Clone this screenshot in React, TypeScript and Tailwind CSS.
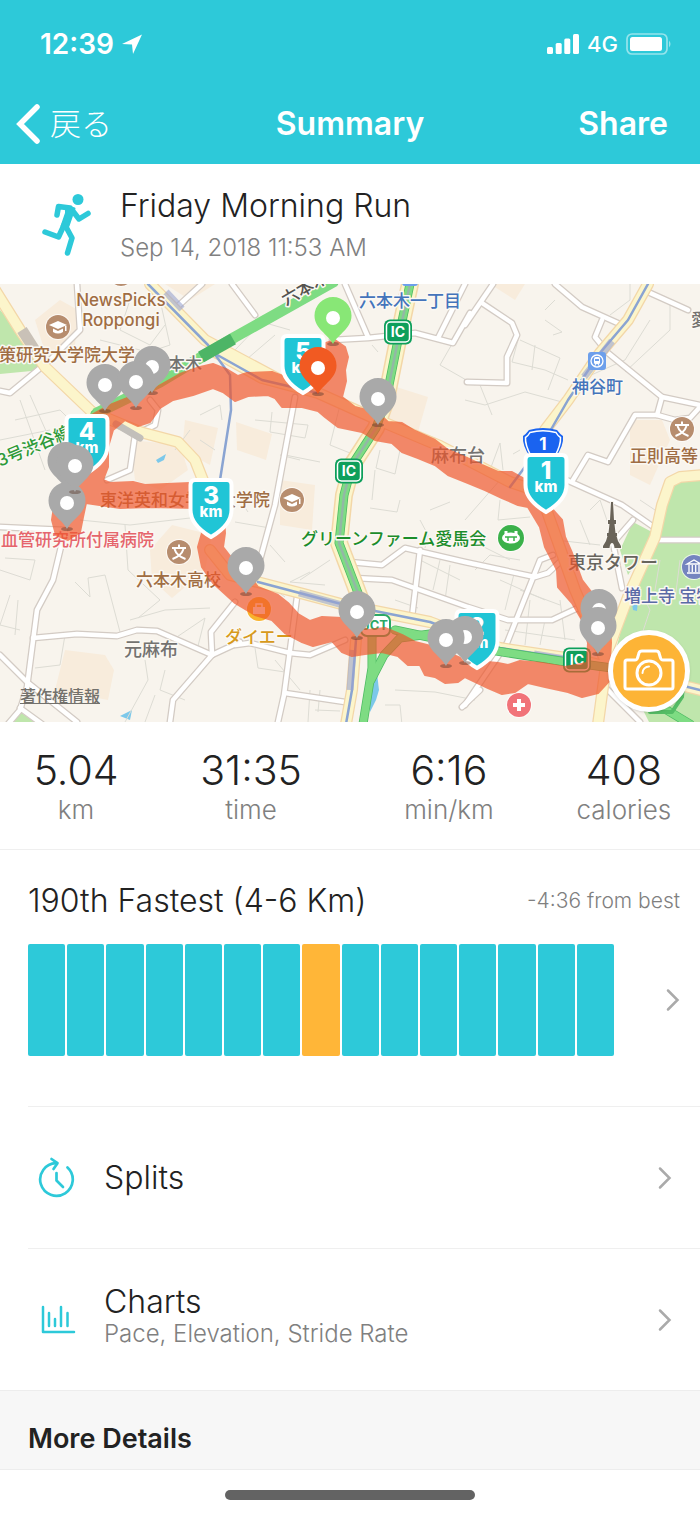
import { clsx } from "clsx";
import type { ReactNode } from "react";

const stats = [
  { value: "5.04", label: "km" },
  { value: "31:35", label: "time" },
  { value: "6:16", label: "min/km" },
  { value: "408", label: "calories" },
];

const BAR_COUNT = 15;
const CURRENT_BAR = 7;

const minorStreets = [
  "M15 420L60 410L75 425M0 440L50 430M20 400L45 470M30 395L50 440M0 455L50 445",
  "M130 300L120 330L150 345L165 325M100 340L140 350M160 300L170 345L140 355",
  "M235 350L262 322L290 330M240 365L275 335M255 420L308 425L305 438L270 432L272 412",
  "M340 405L330 445L355 455M300 460L280 455M285 455L320 462M375 470L372 500",
  "M380 450L376 468L395 474L400 450M440 365L460 330M440 365L475 385M372 345L378 352",
  "M465 400L485 405L525 392L562 402M480 385L492 415M520 340L560 358L548 390",
  "M518 340L512 362L545 370L568 380M535 345L532 370M545 320L562 332L553 335M545 310L555 300",
  "M630 284L630 300L610 315M650 320L625 360L580 380M670 300L670 330L625 372",
  "M490 470L500 443L503 470M513 454L520 450M500 480L465 520",
  "M500 500L498 520L530 517M590 510L600 500L612 535M555 540L600 545",
  "M80 520L130 525L190 518M125 525L128 570L160 600L138 618M0 570L30 580L35 560L5 558",
  "M75 582L90 597L88 578L105 575L120 632M10 595L0 625L20 630M18 600L15 635",
  "M130 620L165 610L210 608M165 645L205 618L198 646M155 695L145 722M65 635L60 665L35 668",
  "M145 660L148 680L125 722M165 670L160 690L185 700M235 522L270 528M270 545L285 562",
  "M310 572L290 582L325 585M235 560L285 597M330 560L300 580M255 648L258 668L285 672",
  "M275 660L300 690M310 690L308 722M240 500L248 512M320 690L318 712M315 710L340 711",
  "M395 690L435 692L475 700M385 705L400 705L402 725M420 520L428 535L425 548M430 510L450 502",
  "M400 500L397 512L370 508M420 560L460 580M440 560L433 590M395 600L418 608M450 565L445 600",
  "M475 570L490 555L520 560M480 545L510 560M500 580L545 600M515 570L505 610M520 590L560 605",
  "M530 600L525 645M545 620L540 645M505 630L575 640M560 600L565 640M590 545L580 520",
  "M640 500L655 510M660 560L655 590M640 640L650 610L645 600M680 560L675 600",
  "M200 415L220 405L222 420M190 430L175 450M200 440L215 450M0 350L20 360",
];

const whiteRoads = [
  "M493 284L465 325",
  "M470 313L453 343L415 333L368 338L332 340",
  "M465 284L438 338",
  "M345 284L368 337",
  "M482 303L512 323L517 335L507 357L507 383L467 382",
  "M555 284L582 307L622 325",
  "M602 320L595 337L608 353L662 397L700 405",
  "M648 292L688 310",
  "M662 397L657 415L635 415L608 462L588 455L573 480",
  "M657 415L675 420L690 418L700 407",
  "M562 478L622 505L655 528",
  "M633 520L613 543L622 588",
  "M658 540L700 540",
  "M350 562L382 565L405 548L465 562L535 577L548 573L562 560",
  "M553 555L540 560L507 643L465 705",
  "M355 578L392 580L468 607L508 620L552 620L580 607",
  "M420 550L412 617",
  "M297 597L290 650L284 695L278 722",
  "M285 693L345 702",
  "M235 645L250 643L290 653L310 655L345 640",
  "M0 527L65 530L53 580L37 610L27 687L20 710L8 724",
  "M33 638L77 634L117 636L137 630L157 631L212 655L240 642",
  "M0 655L27 682L77 722",
  "M20 708L42 724",
  "M212 655L173 700L170 722",
  "M212 655L211 632L235 602",
  "M295 397L275 505L260 560",
  "M77 284L80 330L50 360L10 393L0 391",
  "M202 284L177 307",
  "M232 284L255 315",
  "M117 423L135 435L130 470L107 480",
  "M135 435L155 425L158 410L150 400",
  "M605 687L640 722",
  "M480 690L462 707",
];

const yellowRoads = [
  "M-5 290L20 330L45 367L92 412L140 432L178 442L195 460L206 488",
  "M215 352L262 378L318 393L378 420L440 446L510 482L540 492L575 590L605 660",
  "M648 284L628 320L600 353L568 400L545 430",
  "M210 550L230 575L300 593L345 605L430 622L500 648L580 660L700 690",
  "M356 640L352 690L346 724",
  "M702 475L680 477L670 482L662 505L655 537L628 597L608 650L598 724",
  "M150 284L205 340L280 380",
];

const subwayLines = [
  "M148 284L208 345L230 375L231 410L220 480",
  "M648 284L628 320L600 353L568 400L545 440L510 487",
  "M258 582L345 605L430 622L500 648L580 660L700 690",
  "M356 640L352 690L346 724",
  "M212 352L262 380L318 393",
];

const expressways = [
  "M95 414L160 382L210 352L235 337L335 281",
  "M410 284L398 340L386 400L376 428L352 465L344 495L339 543L355 585L372 630",
  "M395 630L490 650L560 661L612 668L655 703L690 724",
  "M372 630L372 668L363 724",
  "M371 680L384 655L400 638L430 634",
];

// Outer and inner edge of the GPS track
const TRACK_OUTER =
  "M86 503L83 517L80 532L68 540L56 535L52 520L55 500L75 470L75 440L90 416L110 405L135 395L155 388L180 374L200 367L213 364L228 370L238 376L247 373L272 372L285 377L310 380L323 344L335 340L345 347L348 357L345 370L346 381L342 397L355 407L378 413L388 422L402 423L415 431L435 440L448 450L467 458L482 465L498 472L512 472L530 482L553 510L562 520L565 537L572 553L582 580L592 593L610 620L611 643L610 660L610 680L598 693L582 697L568 692L545 687L528 683L515 692L502 694L488 688L465 677L458 682L445 683L435 677L425 675L420 665L408 665L398 656L382 652L365 654L352 656L342 652L332 641L313 646L302 642L285 633L272 620L255 615L235 603L213 583L202 567L198 547L202 533L198 508L150 507L120 508Z";
const TRACK_INNER =
  "M103 480L110 483L133 482L145 485L167 484L190 483L222 490L225 533L223 547L230 556L245 570L258 587L278 595L288 603L298 614L310 621L322 617L342 618L368 630L385 628L402 635L415 642L435 647L465 660L498 663L508 665L520 661L542 663L565 667L587 663L588 643L582 620L572 603L558 587L557 570L545 547L540 527L528 507L518 505L502 498L485 490L468 483L448 475L435 465L418 458L402 452L392 443L375 440L362 432L338 427L325 417L318 411L302 407L282 407L275 398L268 395L248 396L235 401L223 392L213 388L193 395L173 400L160 408L150 422L138 426L125 420L113 430L108 447L108 467Z";

type Anchor = "start" | "middle";
interface MapLabel {
  x: number;
  y: number;
  text: string;
  color: string;
  size?: number;
  anchor?: Anchor;
  rotate?: number;
}

const BROWN = "#a06d43";
const GRAY = "#737270";

const labels: MapLabel[] = [
  { x: 121, y: 306, text: "NewsPicks", color: BROWN, anchor: "middle" },
  { x: 121, y: 326, text: "Roppongi", color: BROWN, anchor: "middle" },
  { x: -1, y: 361, text: "策研究大学院大学", color: BROWN },
  { x: 151, y: 370, text: "六本木", color: GRAY },
  { x: 286, y: 306, text: "六本木", color: "#55534f", rotate: -30 },
  { x: 359, y: 307, text: "六本木一丁目", color: "#4474bb" },
  { x: 572, y: 393, text: "神谷町", color: "#4474bb" },
  { x: 691, y: 326, text: "愛", color: GRAY },
  { x: 630, y: 462, text: "正則高等", color: BROWN },
  { x: 431, y: 462, text: "麻布台", color: GRAY, size: 18 },
  { x: 0, y: 467, text: "3号渋谷線", color: "#2c9a38", rotate: -23 },
  { x: 100, y: 506, text: "東洋英和女学院大学院", color: BROWN },
  { x: 1, y: 546, text: "血管研究所付属病院", color: "#e5656c" },
  { x: 136, y: 586, text: "六本木高校", color: BROWN },
  { x: 124, y: 656, text: "元麻布", color: GRAY, size: 18 },
  { x: 225, y: 643, text: "ダイエー", color: "#d79a1c" },
  { x: 301, y: 545, text: "グリーンファーム愛馬会", color: "#1c8d2b" },
  { x: 568, y: 569, text: "東京タワー", color: "#67645c", size: 18 },
  { x: 624, y: 602, text: "増上寺 宝物", color: "#5a6aa6" },
];

// Each point is the centre of the white dot inside the pin
const grayPins = [
  [152, 367],
  [105, 385],
  [136, 382],
  [66, 463],
  [67, 503],
  [75, 466],
  [378, 399],
  [246, 568],
  [357, 612],
  [465, 637],
  [446, 640],
  [599, 610],
  [598, 628],
];

const kmMarkers = [
  { km: 1, x: 546, y: 455 },
  { km: 2, x: 477, y: 611 },
  { km: 3, x: 211, y: 480 },
  { km: 4, x: 87, y: 416 },
  { km: 5, x: 303, y: 336 },
];

function Pin({ x, y, color }: { x: number; y: number; color: string }) {
  return (
    <g transform={`translate(${x} ${y})`}>
      <ellipse cx="0" cy="26" rx="6" ry="2" fill="#5b3a2c" opacity=".45" />
      <path d="M0 26C-5 16-18.500 11-18.500-2.500a18.500 18.500 0 0 1 37 0C18.500 11 5 16 0 26Z" fill={color} />
      <circle r="7" fill="#fff" />
    </g>
  );
}

function KmMarker({ km, x, y }: { km: number; x: number; y: number }) {
  return (
    <g transform={`translate(${x} ${y})`} textAnchor="middle" fill="#fff" fontWeight="800">
      <path
        d="M-16 0H16Q20.500 0 20.500 5V30C20.500 42 12 50 0 57C-12 50-20.500 42-20.500 30V5Q-20.500 0-16 0Z"
        fill="#20c5d6"
        stroke="#fff"
        strokeWidth="4"
      />
      <text y="24" fontSize="24">{km}</text>
      <text y="37" fontSize="15">km</text>
    </g>
  );
}

function RoadBadge({ x, y, text }: { x: number; y: number; text: string }) {
  return (
    <g transform={`translate(${x} ${y})`}>
      <rect x="-14" y="-12.500" width="28" height="25" rx="6" fill="#0d9f5b" />
      <rect x="-11.500" y="-10" width="23" height="20" rx="4" fill="#0d9f5b" stroke="#fff" strokeWidth="1.500" />
      <text y="5" textAnchor="middle" fontSize="14" fontWeight="700" fill="#fff">{text}</text>
    </g>
  );
}

function Poi({ x, y, color, r = 12, children }: { x: number; y: number; color: string; r?: number; children: ReactNode }) {
  return (
    <g transform={`translate(${x} ${y})`}>
      <circle r={r + 1} fill="#fff" opacity=".7" />
      <circle r={r} fill={color} />
      {children}
    </g>
  );
}

function GraduationCap() {
  return (
    <g fill="#fff">
      <path d="M0-6L9-2L0 2L-9-2Z" />
      <path d="M-5 1.500L0 4L5 1.500V5Q0 8-5 5ZM7-1H8.500V4H7Z" />
    </g>
  );
}

function SchoolMark() {
  return (
    <path d="M0-7.500V-4M-7-4H7M-4.500-3C-3 2 1 5 6.500 7M4.500-3C3 2-1 5-6.500 7" fill="none" stroke="#fff" strokeWidth="2" />
  );
}

function RouteMap() {
  return (
    <svg
      viewBox="0 284 700 438"
      role="img"
      aria-label="Route map"
      className="block h-auto w-full font-['Inter','Noto_Sans_CJK_JP',sans-serif]"
    >
      <rect y="284" width="700" height="438" fill="#f8f4ed" />

      <g fill="#f8ecdc">
        <path d="M35 320L60 300L78 310L75 345L45 352Z" />
        <path d="M130 440L180 445L188 470L160 490L135 480Z" />
        <path d="M185 420L218 428L210 465L182 450Z" />
        <path d="M390 385L428 397L418 432L388 422Z" />
        <path d="M236 422L272 434L266 460L237 450Z" />
        <path d="M280 480L315 485L312 530L280 525Z" />
        <path d="M150 550L172 525L212 535L205 570L172 598L152 580Z" />
        <path d="M65 650L105 655L114 670L108 700L55 690Z" />
        <path d="M630 420L662 420L670 440L650 485L630 475Z" />
        <path d="M490 284H525L515 300Z" />
        <path d="M165 284H215L190 300Z" />
      </g>
      <g fill="#bfe6ac">
        <path d="M0 310L20 332L42 370L0 374Z" />
        <path d="M670 484L700 478V724H650L638 700L612 665L630 595L656 538Z" />
        <path d="M633 522L652 532L648 545L628 575L620 550Z" />
        <path d="M20 712L35 722H10Z" />
      </g>
      <g fill="#7cc8ea">
        <path d="M156 460L166 454L164 460L158 463Z" />
        <path d="M120 716L132 710L130 720Z" />
        <path d="M376 665L379 690L376 700L370 712L370 690Z" />
        <path d="M632 603L638 600L637 611L633 610Z" />
      </g>

      <g fill="none" stroke="#dddcd4" strokeWidth="1">
        {minorStreets.map((d) => <path key={d} d={d} />)}
      </g>
      <g fill="none" strokeLinecap="round" strokeLinejoin="round">
        <g stroke="#d3cbc4" strokeWidth="7">
          {whiteRoads.map((d) => <path key={d} d={d} />)}
        </g>
        <g stroke="#fff" strokeWidth="4.500">
          {whiteRoads.map((d) => <path key={d} d={d} />)}
        </g>
        <g stroke="#f3d7a8" strokeWidth="12">
          {yellowRoads.map((d) => <path key={d} d={d} />)}
          <path d={expressways[1]} strokeWidth="18" />
        </g>
        <g stroke="#fcf5cb" strokeWidth="9.500">
          {yellowRoads.map((d) => <path key={d} d={d} />)}
          <path d={expressways[1]} strokeWidth="15" />
        </g>
        <g stroke="#8aa4d2" strokeWidth="2.500">
          {subwayLines.map((d) => <path key={d} d={d} />)}
        </g>
        <g stroke="#9aa3cf" strokeWidth="7" strokeLinecap="butt" opacity=".6">
          <path d="M299 593L346 606M353 650L350 690M534 654L565 659M612 341L584 377M166 292L182 309" />
        </g>
        <path d="M22 330L36 352" stroke="#c9c1b7" strokeWidth="11" strokeLinecap="butt" />
        <path d="M116 424L140 438" stroke="#c2bfba" strokeWidth="7" />
        <g stroke="#4cba62" strokeWidth="9">
          {expressways.map((d) => <path key={d} d={d} />)}
        </g>
        <g stroke="#7edc83" strokeWidth="7.500">
          {expressways.map((d) => <path key={d} d={d} />)}
        </g>
        <path d={expressways[0]} stroke="#7edc83" strokeWidth="11" strokeLinecap="butt" />
        <path d="M201 357L233 339" stroke="#4db566" strokeWidth="12" strokeLinecap="butt" />
        <path d={expressways[1]} stroke="#93b8a5" strokeWidth="2.500" />
        <path d="M650 712L672 712L682 697L683 683" stroke="#55bd66" strokeWidth="4" />
      </g>

      <g stroke="#fbf8f3" strokeWidth="3" strokeLinejoin="round" paintOrder="stroke" fontWeight="500">
        {labels.map((l) => (
          <text
            key={`${l.text}-${l.x}`}
            x={l.x}
            y={l.y}
            fill={l.color}
            fontSize={l.size ?? 17}
            textAnchor={l.anchor ?? "start"}
            transform={l.rotate ? `rotate(${l.rotate} ${l.x} ${l.y})` : undefined}
          >
            {l.text}
          </text>
        ))}
      </g>

      <Poi x={121} y={274} color="#b78d6e"><GraduationCap /></Poi>
      <Poi x={58} y={327} color="#b78d6e"><GraduationCap /></Poi>
      <Poi x={292} y={500} color="#b78d6e"><GraduationCap /></Poi>
      <Poi x={179} y={552} color="#b78d6e"><SchoolMark /></Poi>
      <Poi x={682} y={429} color="#b78d6e"><SchoolMark /></Poi>
      <Poi x={511} y={538} color="#3bb14a" r={13}>
        <ellipse rx="9" ry="5.500" fill="#fff" />
        <path d="M-5-7V-2M5-7V-2" stroke="#fff" strokeWidth="3" />
        <path d="M-6-1H6M-3-1V3M3-1V3" stroke="#3bb14a" strokeWidth="1.500" />
      </Poi>
      <Poi x={694} y={567} color="#7484bf">
        <path d="M-7-3L0-7L7-3ZM-7 6H7M-5-2V5M-1.700-2V5M1.700-2V5M5-2V5" fill="none" stroke="#fff" strokeWidth="1.300" />
      </Poi>
      <Poi x={259} y={609} color="#f8b32d">
        <path d="M-6-2H6V5H-6Z" fill="#fff" />
        <path d="M-3-2V-5H3V-2" fill="none" stroke="#fff" strokeWidth="1.500" />
      </Poi>
      <Poi x={519} y={705} color="#f17379">
        <path d="M0-6V6M-6 0H6" stroke="#fff" strokeWidth="4" />
      </Poi>
      <g transform="translate(597 361)">
        <rect x="-9" y="-9" width="18" height="18" rx="3" fill="#6d9feb" />
        <circle r="6" fill="none" stroke="#fff" strokeWidth="1.300" />
        <rect x="-3" y="-4" width="6" height="7" rx="1.500" fill="#fff" />
        <path d="M-2-2H2V0H-2Z" fill="#6d9feb" />
        <path d="M-3 6L-1 3M3 6L1 3" stroke="#fff" strokeWidth="1" />
      </g>
      <rect x="402" y="276" width="16" height="10" rx="3" fill="#6d9feb" />

      {/* Tokyo Tower */}
      <g fill="#6a6459" stroke="#fbf8f3" strokeWidth="2" paintOrder="stroke">
        <path d="M611 502H613L614 520H616V524H614.500L615.500 533H617V536H616.500L618 541L621 546V548H614.500Q614 543 612 543T609.500 548H603V546L606 541L607.500 536H607V533H608.500L609.500 524H608V520H610Z" />
      </g>

      <g transform="translate(543 443)">
        <path d="M-14-13Q0-17 14-13Q17-9 20-7Q21 2 13 14H-13Q-21 2-20-7Q-17-9-14-13Z" fill="#1a63f0" />
        <path d="M-13-10.500Q0-14 13-10.500Q15-7 17.500-5.500Q18 2 12 13H-12Q-18 2-17.500-5.500Q-15-7-13-10.500Z" fill="none" stroke="#fff" strokeWidth="1.500" />
        <text y="7" textAnchor="middle" fontSize="17" fontWeight="700" fill="#fff">1</text>
      </g>
      <RoadBadge x={398} y={332} text="IC" />
      <RoadBadge x={349} y={471} text="IC" />
      <RoadBadge x={577} y={660} text="IC" />
      <rect x="361" y="615" width="29" height="21" rx="6" fill="#fff" stroke="#2ba866" strokeWidth="2" />
      <text x="375" y="630" textAnchor="middle" fontSize="13" fontWeight="700" fill="#2ba866">JCT</text>

      <path
        d={`${TRACK_OUTER}${TRACK_INNER}`}
        fill="#f0552a"
        fillRule="evenodd"
        opacity=".68"
        stroke="#f0552a"
        strokeWidth="2"
        strokeLinejoin="round"
      />

      {kmMarkers.map((m) => <KmMarker key={m.km} {...m} />)}
      {grayPins.map(([x, y]) => <Pin key={`${x}-${y}`} x={x} y={y} color="#a9a9a9" />)}
      <Pin x={333} y={318} color="#88e776" />
      <Pin x={318} y={368} color="#f15a22" />
    </svg>
  );
}

function Chevron() {
  return (
    <svg viewBox="0 0 14 24" className="h-6 w-[14px] shrink-0" aria-hidden="true">
      <path d="M2 2.500L11.500 12L2 21.500" fill="none" stroke="#aaa" strokeWidth="2.500" strokeLinecap="round" />
    </svg>
  );
}

function RunnerIcon() {
  return (
    <svg viewBox="40 193 52 65" className="h-[65px] w-[52px] shrink-0" aria-hidden="true">
      <g fill="none" stroke="#2dc9d9" strokeWidth="5.500" strokeLinecap="round" strokeLinejoin="round">
        <path d="M57 216L58.500 207.500L70 209" />
        <path d="M72 211L79 220L88 214.500" />
        <path d="M65 224L58.500 238L45 233" />
        <path d="M65 226L72 239L67.500 254" />
      </g>
      <path d="M66 207L74.500 209.500L68.500 227H61.500L66 214Z" fill="#2dc9d9" stroke="#2dc9d9" strokeWidth="2" strokeLinejoin="round" />
      <circle cx="78" cy="200.500" r="5.500" fill="#2dc9d9" />
    </svg>
  );
}

function SplitsIcon() {
  return (
    <svg viewBox="0 0 40 42" className="h-[42px] w-10 shrink-0" fill="none" stroke="#2dc9d9" strokeWidth="2.700" strokeLinecap="round" strokeLinejoin="round" aria-hidden="true">
      <path d="M31.500 10.500A16.300 16.300 0 1 1 20 6.200" />
      <path d="M15.500 2L21.500 6.200L17.500 12M20.500 16V23.500L27 30" />
    </svg>
  );
}

function ChartsIcon() {
  return (
    <svg viewBox="0 0 40 42" className="h-[42px] w-10 shrink-0" fill="none" stroke="#2dc9d9" strokeWidth="2.500" strokeLinecap="round" strokeLinejoin="round" aria-hidden="true">
      <path d="M7 8V33H38" />
      <path d="M13 14V27M19 20V27M25 8V27M31.500 14V27" />
    </svg>
  );
}

interface DetailRowProps {
  icon: ReactNode;
  title: string;
  subtitle?: string;
}

function DetailRow({ icon, title, subtitle }: DetailRowProps) {
  return (
    <button className="flex h-[142px] w-full items-center border-t border-[#efefef] pr-7 text-left">
      <span className="pl-2">{icon}</span>
      <span className={clsx("flex flex-1 flex-col pl-7", subtitle && "pb-2")}>
        <span className="text-[32px] leading-9">{title}</span>
        {subtitle && <span className="text-2xl leading-7 text-[#808080]">{subtitle}</span>}
      </span>
      <Chevron />
    </button>
  );
}

export default function App() {
  return (
    <div className="bg-white font-['Inter','Noto_Sans_CJK_JP',sans-serif] font-light text-[#222]">
      <header className="bg-[#2dc9d9] text-white">
        <div className="flex h-[84px] items-center justify-between pt-1 pl-10 pr-7">
          <div className="flex items-center gap-2 text-[28px] font-semibold">
            12:39
            <svg viewBox="0 0 20 20" className="h-5 w-5" fill="#fff" aria-hidden="true">
              <path d="M0 10L20 0.500L11 20L10 10.500Z" />
            </svg>
          </div>
          <div className="flex items-center gap-2 text-[22px] font-medium">
            <svg viewBox="0 0 32 20" className="h-5 w-8" fill="#fff" aria-hidden="true">
              <rect x="0" y="13" width="6" height="7" rx="1.500" />
              <rect x="8.700" y="9" width="6" height="11" rx="1.500" />
              <rect x="17.300" y="4.500" width="6" height="15.500" rx="1.500" />
              <rect x="26" y="0" width="6" height="20" rx="1.500" />
            </svg>
            4G
            <svg viewBox="0 0 46 22" className="h-[22px] w-[46px]" fill="none" aria-hidden="true">
              <rect x="1" y="1" width="40" height="20" rx="5" stroke="#fff" strokeOpacity=".5" strokeWidth="1.700" />
              <rect x="4" y="4" width="32" height="14" rx="2.500" fill="#fff" />
              <path d="M43 7.500Q46 11 43 14.500Z" fill="#fff" fillOpacity=".5" />
            </svg>
          </div>
        </div>
        <div className="grid h-20 grid-cols-[1fr_auto_1fr] items-center pl-4 pr-8">
          <button className="flex items-center gap-2 justify-self-start text-[31px] font-light">
            <svg viewBox="0 0 26 42" className="h-[42px] w-[26px]" aria-hidden="true">
              <path d="M21 4L4 21L21 38" fill="none" stroke="#fff" strokeWidth="5.500" strokeLinecap="round" />
            </svg>
            戻る
          </button>
          <h1 className="pl-4 text-[32px] font-semibold">Summary</h1>
          <button className="justify-self-end text-[32px] font-semibold">Share</button>
        </div>
      </header>

      <section className="flex h-[120px] items-center gap-7 px-10">
        <RunnerIcon />
        <div className="pt-1">
          <h2 className="text-[32px] leading-[44px]">Friday Morning Run</h2>
          <p className="text-2xl leading-10 text-[#808080]">Sep 14, 2018 11:53 AM</p>
        </div>
      </section>

      <section className="relative">
        <RouteMap />
        <a
          href="#legal"
          className="absolute bottom-[14px] left-5 text-base font-medium text-[#73716c] underline"
        >
          著作権情報
        </a>
        <button
          aria-label="Add photo"
          className="absolute bottom-[10px] right-[10px] flex size-[82px] items-center justify-center rounded-full border-[5px] border-white bg-[#fdb436] shadow"
        >
          <svg viewBox="0 0 54 46" className="h-[46px] w-[54px]" fill="none" stroke="#fff" strokeWidth="3" strokeLinejoin="round" strokeLinecap="round" aria-hidden="true">
            <path d="M5 12H13Q15 12 15.500 10L17 5Q17.500 3 20 3H34Q36.500 3 37 5L38.500 10Q39 12 41 12H49Q51 12 51 14V39Q51 41 49 41H5Q3 41 3 39V14Q3 12 5 12Z" />
            <circle cx="27" cy="25" r="12" />
            <path d="M20.500 25A6.500 6.500 0 0 1 27 18.500" strokeWidth="2" />
          </svg>
        </button>
      </section>

      <section className="grid h-32 grid-cols-[10fr_13fr_13fr_10fr] items-center border-b border-[#efefef] pt-1 text-center">
        {stats.map((s) => (
          <div key={s.label}>
            <div className="text-[41px] leading-[44px]">{s.value}</div>
            <div className="text-[26px] leading-9 text-[#808080]">{s.label}</div>
          </div>
        ))}
      </section>

      <section className="flex h-64 flex-col pl-7 pr-5 pt-7">
        <div className="flex items-center justify-between">
          <h2 className="text-[32px] leading-[46px]">190th Fastest (4-6 Km)</h2>
          <span className="text-[21px] text-[#808080]">-4:36 from best</span>
        </div>
        <button aria-label="See ranking" className="mt-5 flex items-center justify-between gap-[52px]">
          <span className="flex h-28 flex-1 gap-[2px]">
            {Array.from({ length: BAR_COUNT }, (_, i) => (
              <span
                key={i}
                className={clsx("h-full flex-1 rounded-[2px]", i === CURRENT_BAR ? "bg-[#ffb638]" : "bg-[#2dc9d9]")}
              />
            ))}
          </span>
          <Chevron />
        </button>
      </section>

      <div className="pl-7">
        <DetailRow icon={<SplitsIcon />} title="Splits" />
        <DetailRow icon={<ChartsIcon />} title="Charts" subtitle="Pace, Elevation, Stride Rate" />
      </div>

      <section className="flex h-20 items-end border-y border-[#ededed] bg-[#f7f7f7] px-7 pb-3">
        <h2 className="text-[27px] leading-9 font-semibold">More Details</h2>
      </section>
      <div className="flex h-[46px] items-center justify-center pt-1">
        <div className="h-[10px] w-[250px] rounded-full bg-[#636363]" />
      </div>
    </div>
  );
}
